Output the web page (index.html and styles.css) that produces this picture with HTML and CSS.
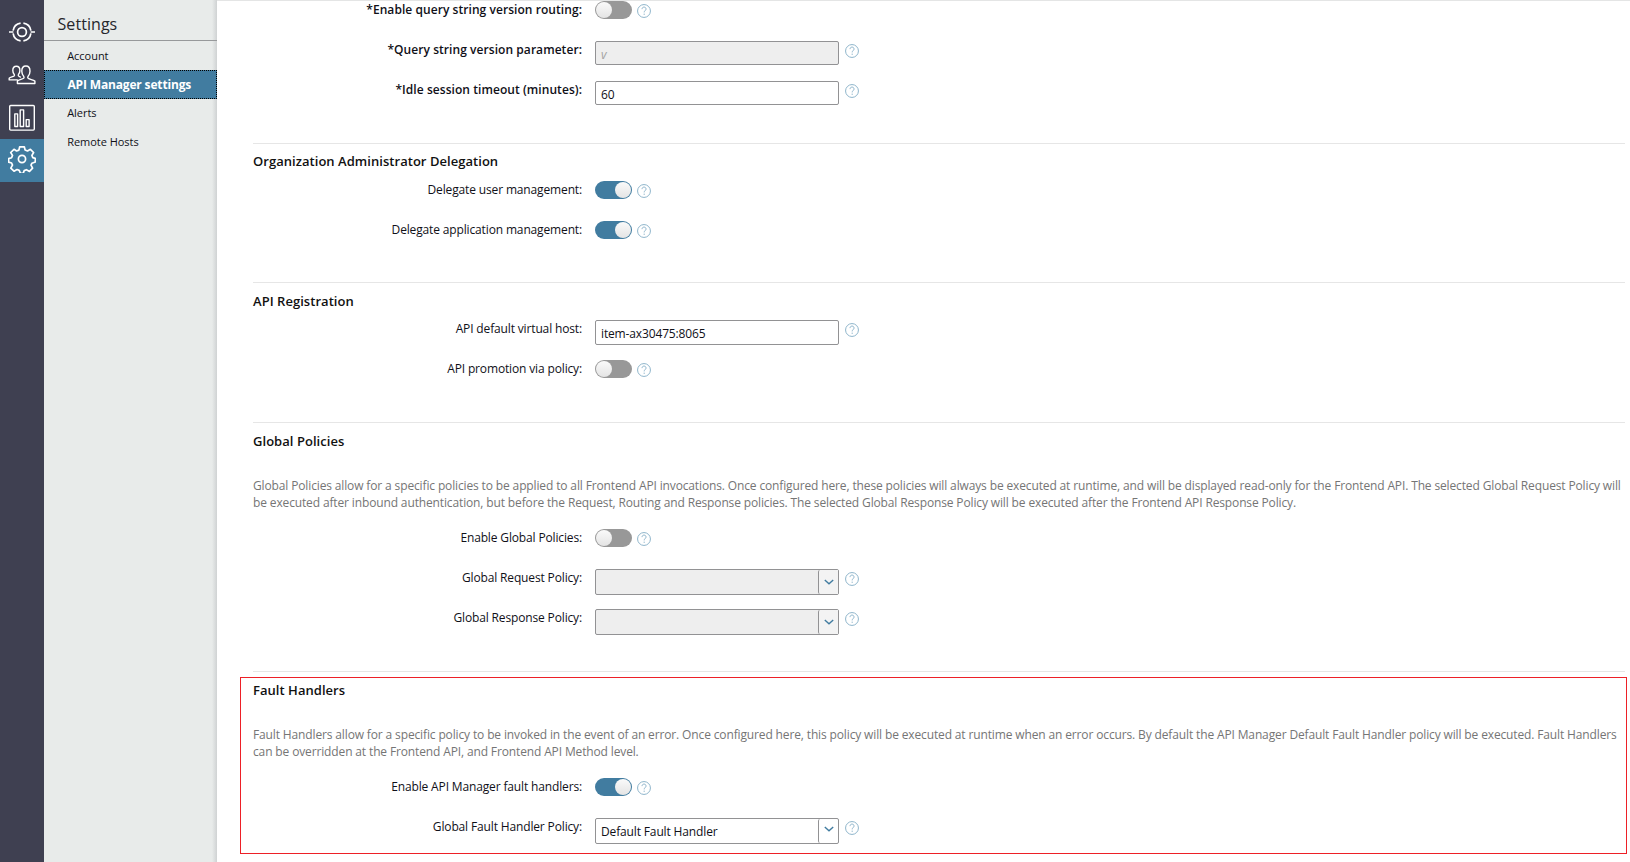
FILE: index.html
```html
<!DOCTYPE html>
<html lang="en">
<head>
<meta charset="utf-8">
<title>API Manager settings</title>
<link rel="stylesheet" href="styles.css">
</head>
<body>
<svg class="defs" aria-hidden="true">
  <symbol id="help" viewBox="0 0 15 15"><circle cx="7.5" cy="7.5" r="6.9"/><path d="M5.400 5.500C5.400 4.200 6.300 3.300 7.500 3.300s2.200.8 2.200 2.100c0 1.500-2 1.800-2 3.600M7.700 10.300v1.400"/></symbol>
  <symbol id="chevron" viewBox="0 0 10 6"><path d="M.8 .9 5 4.700 9.200.9"/></symbol>
</svg>
<div class="app">
  <nav class="rail">
    <a class="rail-item"><svg class="icon" viewBox="0 0 28 28"><circle cx="14" cy="14" r="4.400"/><path d="M12.600 5.100A9 9 0 0 0 5.100 12.600M5.100 15.400A9 9 0 0 0 12.600 22.900M15.400 22.900A9 9 0 0 0 22.900 15.400M22.900 12.600A9 9 0 0 0 15.400 5.100M1 14H5.400M22.600 14H27"/></svg></a>
    <a class="rail-item"><svg class="icon thin" viewBox="0 0 28 28"><path d="M9.400 22.500v-2.400c1-1.300 4.800-1.800 6.200-2.800.5-.5.5-1.300.2-1.800-1.300-1.500-2-3.200-2-5.300 0-3.300 1.500-5.200 4.100-5.200s4.100 1.900 4.100 5.200c0 2.100-.7 3.800-2 5.300-.4.600-.3 1.400.3 1.900 1.400 1 5 1.500 6.600 2.700v2.400ZM9.800 18.900H1.200v-1.700c1.100-1.100 3.800-1.300 4.900-2.200.5-.5.4-1.100.1-1.600-.9-1.200-1.400-2.300-1.400-3.900 0-2.700 1.300-4.300 3.600-4.300 2.200 0 3.500 1.600 3.500 4.300 0 1.600-.5 2.700-1.400 3.900-.3.500-.3 1.100.1 1.600l2.200 1.300"/></svg></a>
    <a class="rail-item"><svg class="icon thin" viewBox="0 0 28 28"><rect x="1.700" y="1.500" width="24.600" height="24.600" rx="1"/><path d="M6.800 9.900h2.800v12.600H6.800ZM12.200 5.900h3.400v16.600h-3.400ZM18.200 15.600h2.900v6.900h-2.900Z"/></svg></a>
    <a class="rail-item active"><svg class="icon" viewBox="0 0 28 28"><circle cx="14" cy="14" r="3.600"/><path d="M11.700 1.800h4.600l.8 3.200 2.400 1 2.900-1.700 3.200 3.200-1.700 2.900.9 2.200 2.500.8v3.600l-3.400 1.200-.9 2 1.600 3-3.100 3.200-3.100-1.700-2.200.9-1 2.700h-2.700l-1.300-2.900-2.200-.9-3 1.700-3.200-3.100 1.700-3-.9-2.100-3-.9v-3.500l3-.9.9-2.300-1.800-2.900 3.300-3.200L8.600 6l2.300-.9Z"/></svg></a>
  </nav>
  <aside class="side">
    <h1 class="side-title">Settings</h1>
    <a class="side-item">Account</a>
    <a class="side-item selected">API Manager settings</a>
    <a class="side-item">Alerts</a>
    <a class="side-item">Remote Hosts</a>
  </aside>
  <main class="main">
    <section class="section first">
      <div class="row required"><label class="label">*Enable query string version routing:</label><span class="toggle"></span><svg class="help"><use href="#help"/></svg></div>
      <div class="row required"><label class="label">*Query string version parameter:</label><span class="field disabled"><em class="ghost">v</em></span><svg class="help"><use href="#help"/></svg></div>
      <div class="row required"><label class="label">*Idle session timeout (minutes):</label><span class="field">60</span><svg class="help"><use href="#help"/></svg></div>
    </section>
    <section class="section delegation">
      <h2 class="heading">Organization Administrator Delegation</h2>
      <div class="row"><label class="label">Delegate user management:</label><span class="toggle on"></span><svg class="help"><use href="#help"/></svg></div>
      <div class="row"><label class="label">Delegate application management:</label><span class="toggle on"></span><svg class="help"><use href="#help"/></svg></div>
    </section>
    <section class="section registration">
      <h2 class="heading">API Registration</h2>
      <div class="row"><label class="label">API default virtual host:</label><span class="field tall">item-ax30475:8065</span><svg class="help"><use href="#help"/></svg></div>
      <div class="row"><label class="label">API promotion via policy:</label><span class="toggle"></span><svg class="help"><use href="#help"/></svg></div>
    </section>
    <section class="section policies">
      <h2 class="heading">Global Policies</h2>
      <p class="note"><span class="note-line">Global Policies allow for a specific policies to be applied to all Frontend API invocations. Once configured here, these policies will always be executed at runtime, and will be displayed read-only for the Frontend API. The selected Global Request Policy will</span> <span class="note-line">be executed after inbound authentication, but before the Request, Routing and Response policies. The selected Global Response Policy will be executed after the Frontend API Response Policy.</span></p>
      <div class="row"><label class="label">Enable Global Policies:</label><span class="toggle"></span><svg class="help"><use href="#help"/></svg></div>
      <div class="row"><label class="label">Global Request Policy:</label><span class="field select disabled"><span class="value"></span><span class="arrow"><svg class="chevron"><use href="#chevron"/></svg></span></span><svg class="help"><use href="#help"/></svg></div>
      <div class="row"><label class="label">Global Response Policy:</label><span class="field select disabled"><span class="value"></span><span class="arrow"><svg class="chevron"><use href="#chevron"/></svg></span></span><svg class="help"><use href="#help"/></svg></div>
    </section>
    <section class="section faults">
      <div class="highlight">
        <h2 class="heading">Fault Handlers</h2>
        <p class="note"><span class="note-line">Fault Handlers allow for a specific policy to be invoked in the event of an error. Once configured here, this policy will be executed at runtime when an error occurs. By default the API Manager Default Fault Handler policy will be executed. Fault Handlers</span> <span class="note-line">can be overridden at the Frontend API, and Frontend API Method level.</span></p>
        <div class="row"><label class="label">Enable API Manager fault handlers:</label><span class="toggle on"></span><svg class="help"><use href="#help"/></svg></div>
        <div class="row"><label class="label">Global Fault Handler Policy:</label><span class="field select"><span class="value">Default Fault Handler</span><span class="arrow"><svg class="chevron"><use href="#chevron"/></svg></span></span><svg class="help"><use href="#help"/></svg></div>
      </div>
    </section>
  </main>
</div>
</body>
</html>
```
FILE: styles.css
```css
* { box-sizing: border-box; }
body { margin: 0; background: #fff; color: #101018; font: 12px/18px "Open Sans", "Noto Sans", sans-serif; }
.defs { display: none; }
.app { display: flex; height: 862px; overflow: hidden; }

.rail { width: 44px; flex: none; background: #3f4051; padding-top: 10px; }
.rail-item { display: flex; height: 43px; align-items: center; justify-content: center; }
.rail-item.active { background: #417ca0; padding-bottom: 3px; }
.icon { width: 28px; height: 28px; fill: none; stroke: #fff; stroke-width: 1.7; stroke-linejoin: round; }
.icon.thin { stroke-width: 1.4; }

.side { width: 173px; flex: none; background: linear-gradient(to left, #cfd2d3, #e8ebea 5px); }
.side-title { margin: 0; height: 41px; padding: 11px 0 0 13.5px; border-bottom: 1px solid #97999b; font-size: 16px; line-height: 26px; font-weight: 400; letter-spacing: .06px; color: #26272c; }
.side-item { display: block; height: 29px; padding-left: 23.2px; line-height: 30px; font-size: 11px; letter-spacing: -.03px; }
.side-item.selected { border: 1px dotted #000; padding-left: 22.5px; line-height: 28px; background: #417ca0; color: #fff; font-size: 12px; font-weight: 700; letter-spacing: -.16px; }
.side-item.selected ~ .side-item { line-height: 28px; }

.main { flex: 1; min-width: 0; border-top: 1px solid #e4e5e5; padding: 0 5px 0 36px; }
.section { border-top: 1px solid #e6e6e6; }
.section.first { height: 142px; border-top: 0; }
.delegation { height: 139px; }
.registration { height: 140px; }
.policies { height: 249px; }
.heading { margin: 0; padding-top: 8px; height: 37px; line-height: 20px; font-size: 13px; font-weight: 600; letter-spacing: .04px; color: #111; }
.delegation .heading { padding-top: 7px; }
.note { margin: 17px 0 0; height: 52px; line-height: 17px; letter-spacing: -.136px; color: #757575; }
.note-line { display: block; white-space: nowrap; }

.row { display: flex; height: 40px; align-items: flex-start; }
.label { width: 329px; margin-right: 13px; text-align: right; white-space: nowrap; letter-spacing: -.145px; }
.required .label { font-weight: 600; letter-spacing: .06px; }
.toggle { display: flex; width: 37px; height: 18px; padding: 1px; border-radius: 9px; background: #989898; }
.toggle::before { content: ""; width: 16px; height: 16px; border-radius: 50%; background: linear-gradient(#fafafa, #e4e4e4); }
.toggle.on { justify-content: flex-end; background: #417ca0; }
.help { width: 14px; height: 14px; margin: 3px 0 0 6px; fill: none; stroke: #86afc7; stroke-width: 1; }
.toggle + .help { margin-left: 5px; }
.field { display: flex; width: 244px; height: 24px; padding: 4px 0 0 5px; border: 1px solid #929294; border-radius: 2px; background: #fff; letter-spacing: -.14px; }
.field.tall { height: 25px; }
.field.disabled { background: #eee; }
.ghost { color: #a2a2a2; }
.select { height: 26px; padding: 0; }
.value { flex: 1; padding: 4px 0 0 5px; }
.arrow { display: flex; width: 20px; align-items: center; justify-content: center; border-left: 1px solid #929294; border-radius: 2px 0 0 2px; padding-bottom: 4px; }
.select.disabled .arrow { background: #f3f3f3; padding-bottom: 0; }
.chevron { width: 10px; height: 6px; fill: none; stroke: #417ca0; stroke-width: 1.4; }

.highlight { margin: 5px -2px 0 -13px; height: 177px; padding-left: 12px; border: 1px solid #ed2027; }
.highlight .heading { padding-top: 2px; height: 31px; }
```
